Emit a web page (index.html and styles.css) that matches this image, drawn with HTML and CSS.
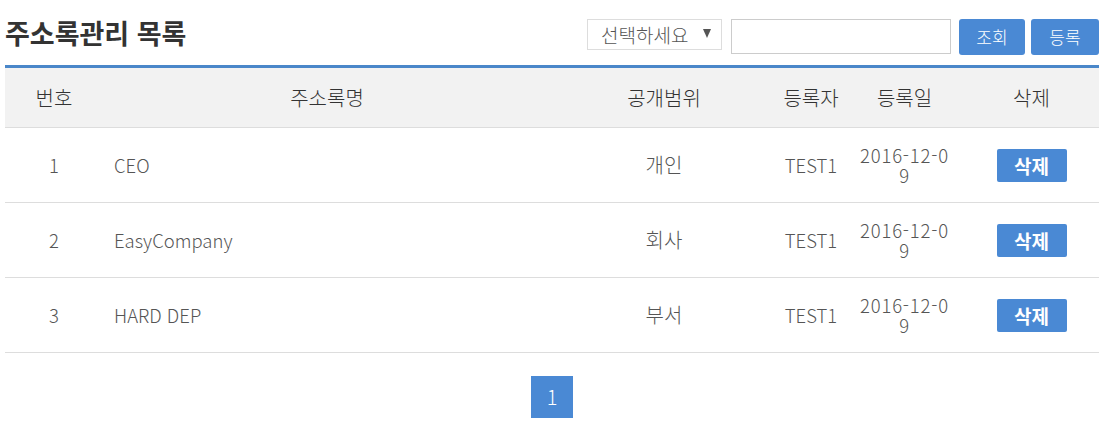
FILE: index.html
```html
<!DOCTYPE html>
<html lang="ko">
<head>
    <meta charset="UTF-8">
    <meta name="viewport" content="width=device-width, initial-scale=1.0">
    <title>주소록관리 목록</title>
    <link rel="stylesheet" href="styles.css">
</head>
<body>
    <div class="wrap">
        <div class="top">
            <h2 class="title">주소록관리 목록</h2>
            <div class="search">
                <div class="select-box">
                    <select>
                        <option>선택하세요</option>
                        <option>주소록명</option>
                        <option>등록자</option>
                    </select>
                </div>
                <input type="text" class="keyword">
                <button class="btn">조회</button>
                <button class="btn btn-reg">등록</button>
            </div>
        </div>

        <table class="list">
            <colgroup>
                <col style="width: 98px">
                <col style="width: 448px">
                <col style="width: 226px">
                <col style="width: 68px">
                <col style="width: 119px">
                <col>
            </colgroup>
            <thead>
                <tr>
                    <th>번호</th>
                    <th>주소록명</th>
                    <th>공개범위</th>
                    <th>등록자</th>
                    <th>등록일</th>
                    <th>삭제</th>
                </tr>
            </thead>
            <tbody>
                <tr>
                    <td>1</td>
                    <td class="name">CEO</td>
                    <td class="ko">개인</td>
                    <td>TEST1</td>
                    <td class="date">2016-12-09</td>
                    <td><button class="btn-del">삭제</button></td>
                </tr>
                <tr>
                    <td>2</td>
                    <td class="name">EasyCompany</td>
                    <td class="ko">회사</td>
                    <td>TEST1</td>
                    <td class="date">2016-12-09</td>
                    <td><button class="btn-del">삭제</button></td>
                </tr>
                <tr>
                    <td>3</td>
                    <td class="name">HARD DEP</td>
                    <td class="ko">부서</td>
                    <td>TEST1</td>
                    <td class="date">2016-12-09</td>
                    <td><button class="btn-del">삭제</button></td>
                </tr>
            </tbody>
        </table>

        <div class="paging">
            <a href="#" class="on">1</a>
        </div>
    </div>
</body>
</html>
```

FILE: styles.css
```css
body {
    margin: 0;
    background-color: #fff;
    color: #555;
    font-family: "Noto Sans CJK KR", "Noto Sans", sans-serif;
    font-weight: 300;
}
.wrap {
    padding: 0 5px;
}
.top {
    display: flex;
    justify-content: space-between;
    align-items: center;
    padding-top: 18px;
    margin-bottom: 10px;
}
.title {
    margin: 0;
    font-size: 27px;
    font-weight: bold;
    color: #333;
    line-height: 30px;
    position: relative;
    top: -4px;
}
.search {
    display: flex;
    align-items: center;
    height: 37px;
}
.select-box {
    position: relative;
    margin-right: 9px;
}
.select-box select {
    -webkit-appearance: none;
    appearance: none;
    width: 135px;
    height: 31px;
    border: 1px solid #ddd;
    background-color: #fff;
    padding: 0 0 0 13px;
    font-family: inherit;
    font-weight: 300;
    font-size: 19px;
    color: #555;
    margin-top: -5px;
    display: block;
}
.select-box::after {
    content: "";
    position: absolute;
    right: 11px;
    top: 5px;
    border-left: 4px solid transparent;
    border-right: 4px solid transparent;
    border-top: 9px solid #555;
}
.keyword {
    width: 220px;
    height: 35px;
    box-sizing: border-box;
    border: 1px solid #ccc;
    margin: 0 8px 0 0;
    padding: 0 6px;
    font-size: 16px;
}
.btn {
    width: 66px;
    height: 36px;
    border: none;
    border-radius: 3px;
    background-color: #4a89d4;
    color: #fff;
    font-family: inherit;
    font-weight: 300;
    font-size: 17px;
    padding: 0;
    cursor: pointer;
}
.btn-reg {
    width: 68px;
    margin-left: 6px;
}
.list {
    width: 100%;
    table-layout: fixed;
    border-collapse: collapse;
    border-top: 3px solid #4a87c9;
    font-size: 18.5px;
}
.list th {
    height: 59px;
    padding: 0;
    background-color: #f2f2f2;
    border-bottom: 1px solid #ddd;
    font-size: 20px;
    font-weight: 300;
    color: #333;
}
.list td {
    height: 74px;
    padding: 0;
    border-bottom: 1px solid #ddd;
    text-align: center;
    line-height: 20px;
}
.list td.ko {
    font-size: 20px;
}
.list td.name {
    text-align: left;
    padding-left: 11px;
}
.list td.date {
    padding: 0 12px;
    letter-spacing: 0.8px;
    word-break: break-all;
}
.btn-del {
    width: 70px;
    height: 33px;
    border: none;
    border-radius: 2px;
    background-color: #4a89d4;
    color: #fff;
    font-family: inherit;
    font-size: 19px;
    font-weight: bold;
    padding: 0;
    cursor: pointer;
}
.paging {
    display: flex;
    justify-content: center;
    margin-top: 23px;
}
.paging a {
    display: block;
    width: 42px;
    height: 42px;
    line-height: 42px;
    text-align: center;
    font-size: 20px;
    color: #fff;
    text-decoration: none;
    background-color: #4a89d4;
}
```
